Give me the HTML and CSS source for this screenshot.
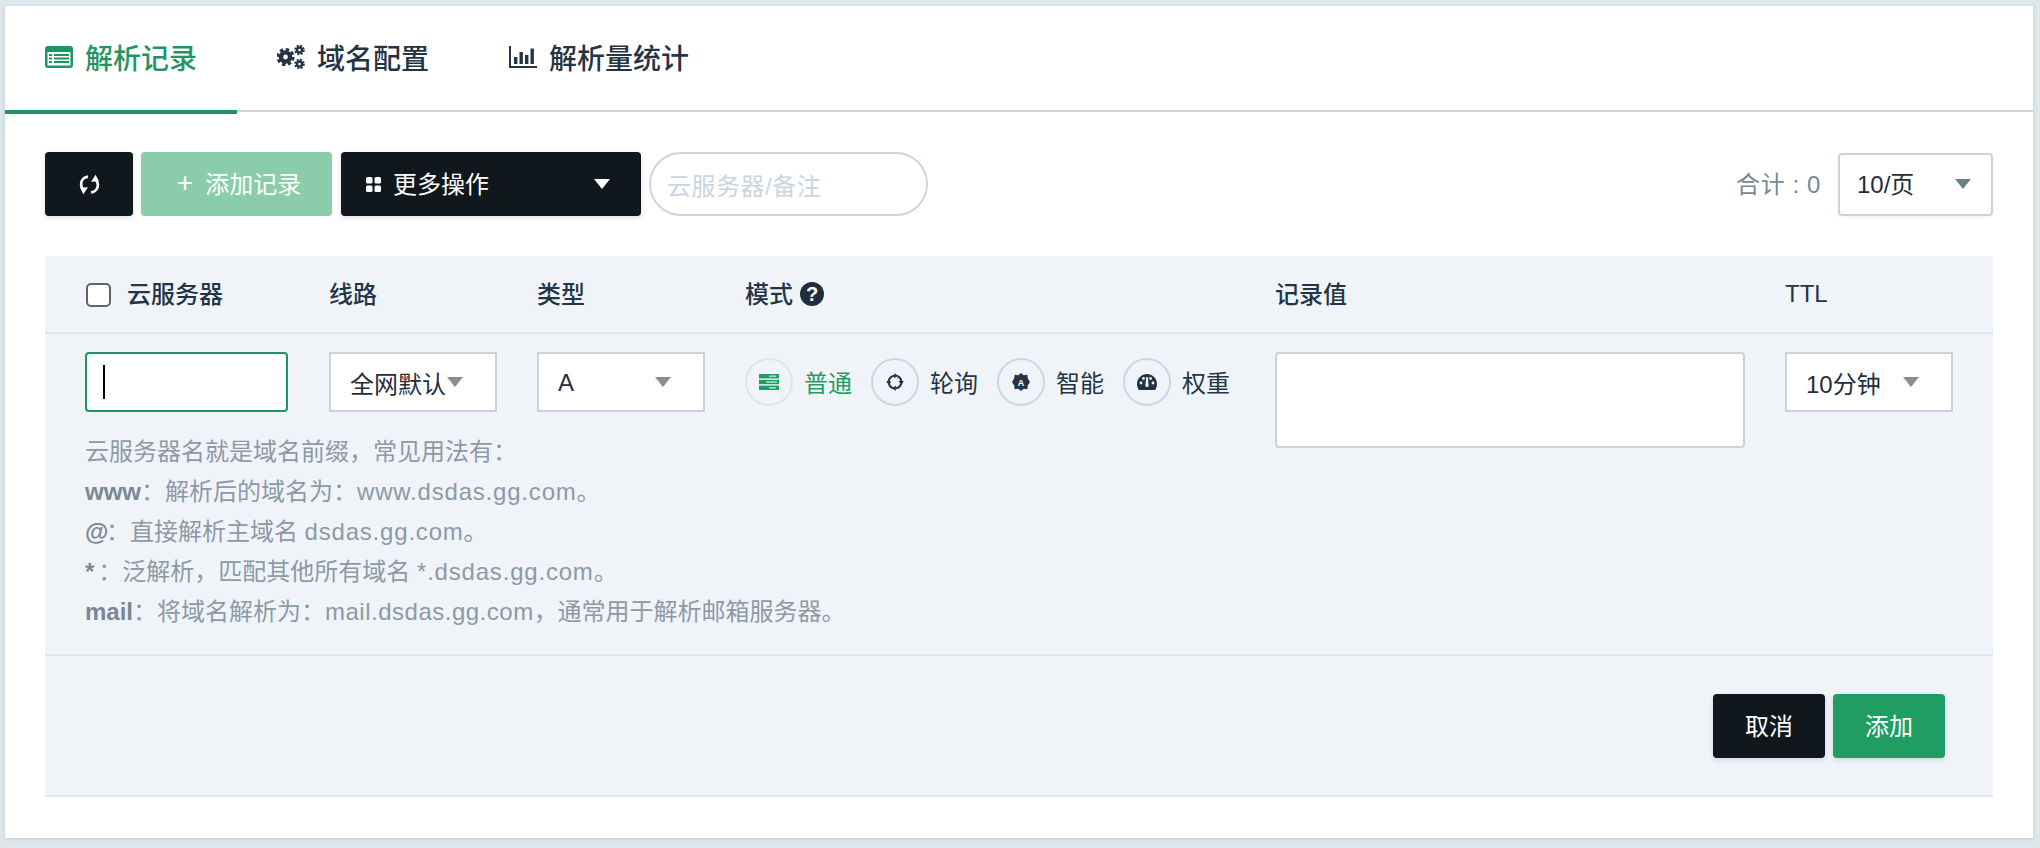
FILE: index.html
```html
<!DOCTYPE html>
<html lang="zh-CN">
<head>
<meta charset="utf-8">
<title>解析记录</title>
<link rel="stylesheet" href="styles.css">
</head>
<body>
<main class="panel">
  <nav class="tabs">
    <a class="tab active">
      <svg class="tab-icon" viewBox="0 0 28 22"><rect x="0" y="0" width="28" height="22" rx="3" fill="currentColor"/><rect x="2.5" y="6" width="23" height="13.5" fill="#fff"/><g fill="currentColor"><rect x="4" y="8" width="3" height="2"/><rect x="4" y="11.5" width="3" height="2"/><rect x="4" y="15" width="3" height="2"/><rect x="9" y="8" width="15" height="2"/><rect x="9" y="11.5" width="15" height="2"/><rect x="9" y="15" width="15" height="2"/></g></svg>
      <span>解析记录</span>
    </a>
    <a class="tab">
      <svg class="tab-icon" viewBox="0 0 28 24"><g fill="none" stroke="currentColor"><circle cx="8.5" cy="12" r="4.600" stroke-width="4.400"/><circle cx="8.5" cy="12" r="7.600" stroke-width="3" stroke-dasharray="3.400 2.570"/><circle cx="22.500" cy="5" r="2.500" stroke-width="2.400"/><circle cx="22.500" cy="5" r="4.300" stroke-width="2" stroke-dasharray="2 1.380"/><circle cx="22.500" cy="19" r="2.500" stroke-width="2.400"/><circle cx="22.500" cy="19" r="4.300" stroke-width="2" stroke-dasharray="2 1.380"/></g></svg>
      <span>域名配置</span>
    </a>
    <a class="tab">
      <svg class="tab-icon" viewBox="0 0 28 22"><g fill="currentColor"><rect x="0" y="0" width="2" height="22"/><rect x="0" y="20" width="28" height="2"/><rect x="5" y="11" width="3.400" height="7"/><rect x="10.500" y="6" width="3.400" height="12"/><rect x="16" y="9" width="3.400" height="9"/><rect x="21.500" y="2.500" width="3.400" height="15.500"/></g></svg>
      <span>解析量统计</span>
    </a>
  </nav>

  <section class="toolbar">
    <div class="toolbar-left">
      <button class="btn btn-dark btn-refresh">
        <svg class="refresh-icon" viewBox="0 0 20 20"><g fill="none" stroke="#fff" stroke-width="2.600"><path d="M8.500 2.500C4.500 3 2 6 2 9.800c0 2 .8 3.700 2.200 4.800"/><path d="M11.500 17.500c4-.5 6.500-3.500 6.500-7.300 0-2-.8-3.700-2.200-4.800"/></g><path d="M1 13l7.500-.4-4.300 6.600zM19 7l-7.500.4 4.300-6.600z" fill="#fff"/></svg>
      </button>
      <button class="btn btn-green-light"><span class="plus">+</span><span class="btn-label">添加记录</span></button>
      <button class="btn btn-dark btn-more">
        <svg class="dots-icon" viewBox="0 0 15 15"><g fill="#fff"><rect x="0" y="0" width="6.500" height="6.500" rx="1.500"/><rect x="8.500" y="0" width="6.500" height="6.500" rx="1.500"/><rect x="0" y="8.500" width="6.500" height="6.500" rx="1.500"/><rect x="8.500" y="8.500" width="6.500" height="6.500" rx="1.500"/></g></svg>
        <span class="btn-label">更多操作</span>
        <i class="caret caret-white"></i>
      </button>
      <div class="search">云服务器/备注</div>
    </div>
    <div class="toolbar-right">
      <span class="total">合计 : 0</span>
      <div class="page-size"><span class="btn-label">10/页</span><i class="caret caret-slate"></i></div>
    </div>
  </section>

  <section class="form-table">
    <div class="grid head-row">
      <div class="head-cell"><span class="checkbox"></span><span class="head-label">云服务器</span></div>
      <div class="head-cell"><span class="head-label">线路</span></div>
      <div class="head-cell"><span class="head-label">类型</span></div>
      <div class="head-cell mode-head"><span class="head-label">模式</span>
        <svg class="help-icon" viewBox="0 0 24 24"><circle cx="12" cy="12" r="12" fill="#1f2d3d"/><text x="12" y="19" text-anchor="middle" class="help-mark">?</text></svg>
      </div>
      <div class="head-cell"><span class="head-label">记录值</span></div>
      <div class="head-cell"><span>TTL</span></div>
    </div>

    <div class="grid body-row">
      <div class="name-input"><i class="text-caret"></i></div>
      <div class="select"><span class="select-label">全网默认</span><i class="caret caret-gray"></i></div>
      <div class="select"><span class="select-label">A</span><i class="caret caret-gray"></i></div>
      <div class="modes">
        <div class="mode active">
          <span class="mode-circle"><svg class="mode-icon" viewBox="0 0 20 16"><g fill="currentColor"><rect x="0" y="0" width="20" height="4.400"/><rect x="0" y="5.800" width="20" height="4.400"/><rect x="0" y="11.600" width="20" height="4.400"/></g><g fill="#a9dcc3"><rect x="10" y="1.400" width="7" height="1.600"/><rect x="7" y="7.200" width="11" height="1.600"/><rect x="10" y="13" width="7" height="1.600"/></g></svg></span>
          <span class="mode-label">普通</span>
        </div>
        <div class="mode">
          <span class="mode-circle"><svg class="mode-icon" viewBox="0 0 20 20"><circle cx="10" cy="10" r="7" fill="none" stroke="currentColor" stroke-width="2.400" stroke-dasharray="7.500 3.500" stroke-dashoffset="-2"/><g fill="currentColor"><path d="M9 .2l4.800 2.800L9 5.800z"/><path d="M19.800 9L17 13.800 14.200 9z"/><path d="M11 19.800L6.200 17l4.800-2.800z"/><path d="M.2 11L3 6.200 5.800 11z"/></g></svg></span>
          <span class="mode-label">轮询</span>
        </div>
        <div class="mode">
          <span class="mode-circle"><svg class="mode-icon" viewBox="0 0 20 20"><path d="M10 0l3 2.600 4-.6.600 4L20 10l-2.400 3.600-.6 4.400-4-.4L10 20l-3-2.400-4 .4-.6-4.400L0 10l2.400-4L3 2l4 .6z" fill="currentColor"/><text x="10" y="14" text-anchor="middle" class="auto-mark">A</text></svg></span>
          <span class="mode-label">智能</span>
        </div>
        <div class="mode">
          <span class="mode-circle"><svg class="mode-icon" viewBox="0 0 20 16"><path d="M10 0C4.500 0 0 4.400 0 10c0 2.200.7 4.200 1.800 6h16.400c1.100-1.800 1.800-3.800 1.800-6C20 4.400 15.500 0 10 0z" fill="currentColor"/><g fill="#f0f4f9"><circle cx="4" cy="9" r="1.400"/><circle cx="6.500" cy="4.500" r="1.400"/><circle cx="13.500" cy="4.500" r="1.400"/><circle cx="16" cy="9" r="1.400"/><path d="M9.200 3h1.600l.8 8.500a1.600 1.600 0 1 1-3.200 0z"/></g></svg></span>
          <span class="mode-label">权重</span>
        </div>
      </div>
      <div class="value-box"></div>
      <div class="select"><span class="select-label">10分钟</span><i class="caret caret-gray"></i></div>
      <div class="hint">
        <p>云服务器名就是域名前缀，常见用法有：</p>
        <p><b>www</b>：解析后的域名为：<span class="host">www.dsdas.gg.com</span>。</p>
        <p><b class="key-at">@</b>：直接解析主域名 <span class="host">dsdas.gg.com</span>。</p>
        <p><b class="key-star">*</b>：泛解析，匹配其他所有域名 <span class="host">*.dsdas.gg.com</span>。</p>
        <p><b>mail</b>：将域名解析为：<span class="host-mail">mail.dsdas.gg.com</span>，通常用于解析邮箱服务器。</p>
      </div>
    </div>

    <div class="form-actions">
      <button class="btn btn-dark btn-action"><span class="btn-label">取消</span></button>
      <button class="btn btn-green btn-action"><span class="btn-label">添加</span></button>
    </div>
  </section>
</main>
</body>
</html>
```
FILE: styles.css
```css
* { box-sizing: border-box; }
html, body { margin: 0; height: 848px; overflow: hidden; }
body {
  background: #dde6ea;
  padding: 6px 7px 10px 5px;
  font-family: "Liberation Sans", "Noto Sans CJK SC", sans-serif;
  font-size: 24px;
  color: #1f2d3d;
}
.panel {
  height: 832px;
  background: #fff;
  box-shadow: 0 1px 3px rgba(90, 120, 140, .25);
}

/* tabs */
.tabs {
  display: flex;
  height: 106px;
  border-bottom: 2px solid #cbd2de;
}
.tab {
  display: flex;
  align-items: center;
  gap: 12px;
  height: 108px;
  padding: 0 40px 2px;
  font-size: 28px;
  font-weight: 500;
  color: #243447;
  border-bottom: 4px solid transparent;
}
.tab.active { color: #1f9662; border-bottom-color: #1f9662; }
.tab-icon { width: 28px; height: 24px; flex: none; }

/* toolbar */
.toolbar {
  display: flex;
  justify-content: space-between;
  align-items: center;
  margin: 40px 40px;
}
.toolbar-left { display: flex; gap: 8px; align-items: center; }
.toolbar-right { display: flex; gap: 17px; align-items: center; }
.btn {
  display: flex;
  align-items: center;
  justify-content: center;
  height: 64px;
  border: 0;
  border-radius: 4px;
  padding: 0;
  font: inherit;
  color: #fff;
  box-shadow: 0 2px 5px rgba(30, 50, 70, .15);
}
.btn-label { margin-top: -3px; white-space: nowrap; }
.btn-dark { background: #10181e; }
.btn-green { background: #1f9d63; }
.btn-green-light { background: #8bcdaa; width: 191px; padding-left: 5px; box-shadow: none; }
.btn-refresh { width: 88px; }
.refresh-icon { width: 21px; height: 21px; }
.plus { margin-right: 12px; font-size: 28px; line-height: 1; margin-top: -2px; }
.btn-more { width: 300px; margin-left: 1px; justify-content: flex-start; padding: 0 31px 0 25px; }
.dots-icon { width: 15px; height: 15px; margin-right: 12px; }
.search {
  display: flex;
  align-items: center;
  width: 279px;
  height: 64px;
  padding-left: 16px;
  border: 2px solid #cbd5e0;
  border-radius: 32px;
  color: #cbd5e0;
  letter-spacing: .5px;
}
.total { color: #7b8794; margin-top: -3px; letter-spacing: .6px; }
.page-size {
  display: flex;
  align-items: center;
  width: 155px;
  height: 63px;
  padding: 0 20px 0 17px;
  border: 2px solid #cbd2de;
  border-radius: 4px;
  box-shadow: 0 1px 3px rgba(30, 50, 70, .08);
}

/* carets */
.caret {
  display: block;
  flex: none;
  width: 0;
  height: 0;
  margin-left: auto;
  border-style: solid;
  border-width: 10px 8px 0;
  border-color: transparent;
}
.caret-white { border-top-color: #fff; }
.caret-slate { border-top-color: #6d7f86; }
.caret-gray { border-top-color: #8a8f93; }

/* form table */
.form-table {
  height: 541px;
  margin: 0 40px;
  background: #f0f4f9;
  border-radius: 4px 4px 0 0;
  border-bottom: 2px solid #e2e6ea;
}
.grid {
  display: grid;
  grid-template-columns: 244px 208px 208px 530px 510px 208px;
  padding-left: 40px;
}
.head-row {
  height: 78px;
  align-items: center;
  border-bottom: 2px solid #e1e7ec;
}
.head-cell {
  display: flex;
  align-items: center;
  font-weight: 500;
  color: #243447;
}
.head-label { margin-top: -3px; }
.checkbox {
  width: 25px;
  height: 24px;
  margin: 2px 16px 0 1px;
  background: #fff;
  border: 2px solid #5f6368;
  border-radius: 5px;
}
.mode-head { gap: 7px; }
.help-icon { width: 24px; height: 24px; }
.help-mark { font: 700 20px "Liberation Sans", sans-serif; fill: #fff; }

.body-row {
  height: 322px;
  padding-top: 18px;
  grid-template-rows: 60px 1fr;
  border-bottom: 2px solid #e1e7ec;
}
.name-input {
  display: flex;
  align-items: center;
  width: 203px;
  height: 60px;
  padding-left: 16px;
  background: #fff;
  border: 2px solid #1f9662;
  border-radius: 4px;
}
.text-caret { display: block; width: 2px; height: 34px; background: #000; }
.select {
  display: flex;
  align-items: center;
  width: 168px;
  height: 60px;
  padding: 0 32px 0 19px;
  background: #fff;
  border: 2px solid #cbd2de;
}
.select-label { white-space: nowrap; margin-top: 1px; }
.modes { display: flex; gap: 19px; align-items: center; height: 60px; }
.mode { display: flex; align-items: center; gap: 11px; color: #243447; }
.mode.active { color: #1f9d63; }
.mode-label { margin-top: -1px; }
.mode-circle {
  display: flex;
  align-items: center;
  justify-content: center;
  width: 48px;
  height: 48px;
  border: 2px solid #cdd5de;
  border-radius: 50%;
}
.mode.active .mode-circle { border-color: #d3ebe2; }
.mode-icon { width: 20px; height: 18px; }
.auto-mark { font: 700 10px "Liberation Sans", sans-serif; fill: #fff; }
.value-box {
  grid-row: 1 / 3;
  grid-column: 5;
  width: 470px;
  height: 96px;
  background: #fff;
  border: 2px solid #cbd2de;
  border-radius: 4px;
}
.hint {
  grid-row: 2;
  grid-column: 1 / 5;
  margin-top: 20px;
  line-height: 40px;
  color: #8d99a6;
}
.hint p { margin: 0; }
.hint b { color: #7b8794; }
.hint .key-at { letter-spacing: -2.500px; }
.hint .key-star { letter-spacing: 4px; }
.host { letter-spacing: .8px; }
.host-mail { letter-spacing: .5px; }

.form-actions {
  display: flex;
  justify-content: flex-end;
  gap: 8px;
  padding: 38px 48px 0 0;
}
.btn-action { width: 112px; }
```
